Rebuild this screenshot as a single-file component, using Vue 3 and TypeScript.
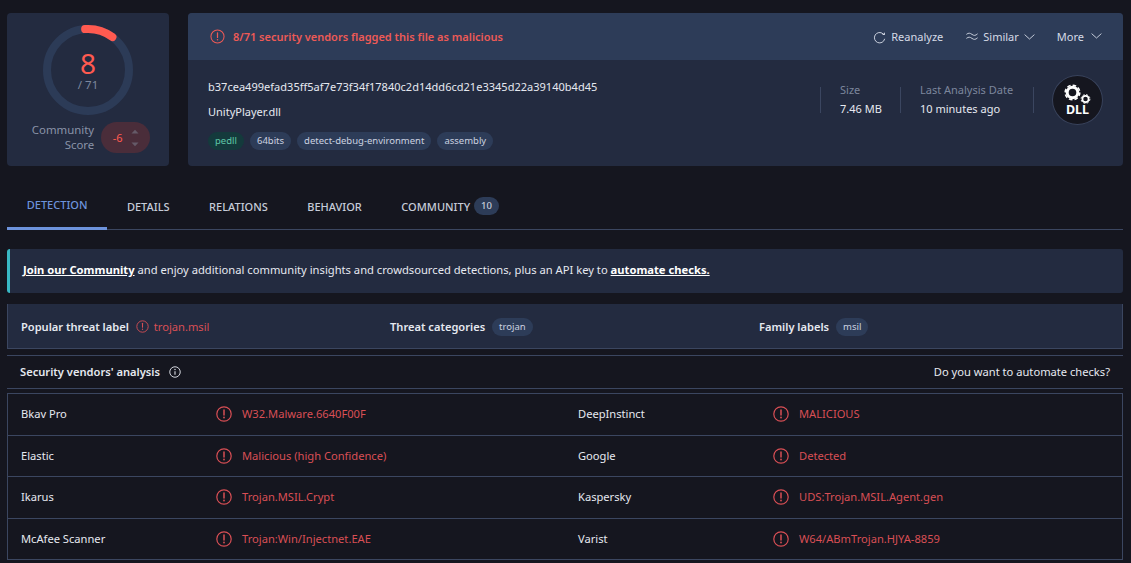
<script setup lang="ts">
interface VendorRow {
  name: string
  result: string
  name2: string
  result2: string
}

const tags = ['64bits', 'detect-debug-environment', 'assembly']
const tabs = ['DETECTION', 'DETAILS', 'RELATIONS', 'BEHAVIOR']
const rows: VendorRow[] = [
  { name: 'Bkav Pro', result: 'W32.Malware.6640F00F', name2: 'DeepInstinct', result2: 'MALICIOUS' },
  { name: 'Elastic', result: 'Malicious (high Confidence)', name2: 'Google', result2: 'Detected' },
  { name: 'Ikarus', result: 'Trojan.MSIL.Crypt', name2: 'Kaspersky', result2: 'UDS:Trojan.MSIL.Agent.gen' },
  { name: 'McAfee Scanner', result: 'Trojan:Win/Injectnet.EAE', name2: 'Varist', result2: 'W64/ABmTrojan.HJYA-8859' },
]
</script>

<template>
  <div class="page">
    <section class="top">
      <div class="score-card">
        <div class="gauge">
          <svg viewBox="0 0 92 92" width="92" height="92" aria-hidden="true">
            <circle cx="46" cy="46" r="41" fill="none" stroke="#2c3b57" stroke-width="8" />
            <circle
              cx="46"
              cy="46"
              r="41"
              fill="none"
              stroke="#ff5a50"
              stroke-width="8"
              stroke-linecap="round"
              stroke-dasharray="29 300"
              transform="rotate(-94 46 46)"
            />
          </svg>
          <div class="gauge-text">
            <div class="gauge-num">8</div>
            <div class="gauge-total">/ 71</div>
          </div>
        </div>
        <div class="community">
          <div class="community-label">Community<br />Score</div>
          <div class="vote">
            <span class="vote-num">-6</span>
            <span class="vote-arrows">
              <svg width="8" height="5" viewBox="0 0 8 5"><path d="M0.5 4.5 L4 0.8 L7.5 4.5 Z" fill="#655a68" /></svg>
              <svg width="8" height="5" viewBox="0 0 8 5"><path d="M0.5 0.5 L4 4.2 L7.5 0.5 Z" fill="#655a68" /></svg>
            </span>
          </div>
        </div>
      </div>

      <div class="file-card">
        <div class="file-head">
          <div class="flag">
            <svg class="alert" width="15" height="15" viewBox="0 0 16 16" aria-hidden="true">
              <circle cx="8" cy="8" r="7" fill="none" stroke="currentColor" stroke-width="1.1" />
              <path d="M8 4v5" stroke="currentColor" stroke-width="1.3" stroke-linecap="round" />
              <circle cx="8" cy="11.4" r="0.8" fill="currentColor" />
            </svg>
            <span>8/71 security vendors flagged this file as malicious</span>
          </div>
          <div class="actions">
            <span class="action">
              <svg class="reload" width="13" height="13" viewBox="0 0 14 14" aria-hidden="true">
                <path d="M10.8 3A5.6 5.6 0 1 0 12.6 8.4" fill="none" stroke="#d5dae6" stroke-width="1" />
                <path d="M12.8 1.4v3H9.8Z" fill="#d5dae6" />
              </svg>
              Reanalyze
            </span>
            <span class="action similar">
              <svg width="12" height="8" viewBox="0 0 12 8" aria-hidden="true">
                <path d="M0.4 2.4C2.6 0.6 4 1 6 2.4S9.4 3.8 11.6 1.8" fill="none" stroke="#d5dae6" stroke-width="0.9" />
                <path d="M0.4 6.4C2.6 4.6 4 5 6 6.4S9.4 7.8 11.6 5.8" fill="none" stroke="#d5dae6" stroke-width="0.9" />
              </svg>
              <span class="similar-text">Similar</span>
              <svg class="chev-low" width="11" height="6" viewBox="0 0 11 6" aria-hidden="true"><path d="M0.6 0.6 L5.5 5 L10.4 0.6" fill="none" stroke="#d5dae6" stroke-width="0.9" /></svg>
            </span>
            <span class="action more">
              More
              <svg width="11" height="6" viewBox="0 0 11 6" aria-hidden="true"><path d="M0.6 0.6 L5.5 5 L10.4 0.6" fill="none" stroke="#d5dae6" stroke-width="0.9" /></svg>
            </span>
          </div>
        </div>
        <div class="file-body">
          <div class="file-main">
            <div class="hash">b37cea499efad35ff5af7e73f34f17840c2d14dd6cd21e3345d22a39140b4d45</div>
            <div class="file-name">UnityPlayer.dll</div>
            <div class="tags">
              <span class="tag green">pedll</span>
              <span v-for="tag in tags" :key="tag" class="tag">{{ tag }}</span>
            </div>
          </div>
          <div class="meta">
            <div class="meta-item size">
              <div class="meta-label">Size</div>
              <div class="meta-value">7.46 MB</div>
            </div>
            <div class="meta-item date">
              <div class="meta-label">Last Analysis Date</div>
              <div class="meta-value">10 minutes ago</div>
            </div>
            <div class="meta-item file-type">
              <div class="dll">
                <svg width="28" height="24" viewBox="0 0 28 24" aria-hidden="true">
                  <circle cx="8.5" cy="8.5" r="5.3" fill="none" stroke="#fff" stroke-width="3" />
                  <circle cx="8.5" cy="8.5" r="7.3" fill="none" stroke="#fff" stroke-width="1.6" stroke-dasharray="3.6 2.13" />
                  <circle cx="21.5" cy="15" r="3.1" fill="none" stroke="#fff" stroke-width="1.7" />
                  <circle cx="21.5" cy="15" r="4.4" fill="none" stroke="#fff" stroke-width="0.9" stroke-dasharray="2 1.46" />
                </svg>
                <span>DLL</span>
              </div>
            </div>
          </div>
        </div>
      </div>
    </section>

    <nav class="tabs">
      <a v-for="(tab, i) in tabs" :key="tab" class="tab" :class="{ active: i === 0 }">{{ tab }}</a>
      <a class="tab">COMMUNITY <span class="count">10</span></a>
    </nav>

    <div class="banner">
      <a class="strong-link">Join our Community</a> and enjoy additional community insights and crowdsourced detections, plus an API key to
      <a class="strong-link">automate checks.</a>
    </div>

    <div class="threat">
      <div class="threat-col">
        <b>Popular threat label</b>
        <span class="threat-red">
          <svg width="13" height="13" viewBox="0 0 16 16" aria-hidden="true">
            <circle cx="8" cy="8" r="7" fill="none" stroke="currentColor" stroke-width="1.1" />
            <path d="M8 4v5" stroke="currentColor" stroke-width="1.3" stroke-linecap="round" />
            <circle cx="8" cy="11.4" r="0.8" fill="currentColor" />
          </svg>
          trojan.msil
        </span>
      </div>
      <div class="threat-col">
        <b>Threat categories</b>
        <span class="tag small">trojan</span>
      </div>
      <div class="threat-col">
        <b>Family labels</b>
        <span class="tag small">msil</span>
      </div>
    </div>

    <div class="analysis-head">
      <div class="analysis-title">
        <b>Security vendors' analysis</b>
        <svg width="12" height="12" viewBox="0 0 16 16" aria-hidden="true">
          <circle cx="8" cy="8" r="7" fill="none" stroke="#e6e9f0" stroke-width="1.2" />
          <path d="M8 7v4.6" stroke="#e6e9f0" stroke-width="1.4" />
          <circle cx="8" cy="4.7" r="0.9" fill="#e6e9f0" />
        </svg>
      </div>
      <span>Do you want to automate checks?</span>
    </div>

    <div class="table">
      <div v-for="row in rows" :key="row.name" class="row">
        <div class="vendor">{{ row.name }}</div>
        <div class="result">
          <svg width="16" height="16" viewBox="0 0 16 16" aria-hidden="true">
            <circle cx="8" cy="8" r="7.2" fill="none" stroke="currentColor" stroke-width="1.2" />
            <path d="M8 4v5" stroke="currentColor" stroke-width="1.5" stroke-linecap="round" />
            <circle cx="8" cy="11.5" r="0.9" fill="currentColor" />
          </svg>
          <span>{{ row.result }}</span>
        </div>
        <div class="vendor">{{ row.name2 }}</div>
        <div class="result">
          <svg width="16" height="16" viewBox="0 0 16 16" aria-hidden="true">
            <circle cx="8" cy="8" r="7.2" fill="none" stroke="currentColor" stroke-width="1.2" />
            <path d="M8 4v5" stroke="currentColor" stroke-width="1.5" stroke-linecap="round" />
            <circle cx="8" cy="11.5" r="0.9" fill="currentColor" />
          </svg>
          <span>{{ row.result2 }}</span>
        </div>
      </div>
    </div>
  </div>
</template>

<style scoped>
.page {
  width: 1131px;
  height: 563px;
  overflow: hidden;
  box-sizing: border-box;
  padding: 13px 8px 0 7px;
  background: #15161f;
  color: #e6e9f0;
  font-family: "Noto Sans", "Liberation Sans", sans-serif;
  font-size: 11.15px;
}

.top {
  display: grid;
  grid-template-columns: 162px 1fr;
  gap: 19px;
  height: 153px;
}

.score-card {
  background: #232b40;
  border-radius: 4px;
  display: flex;
  flex-direction: column;
  align-items: center;
  padding-top: 11px;
}

.gauge {
  position: relative;
  width: 92px;
  height: 92px;
}

.gauge-text {
  position: absolute;
  inset: 0;
  display: flex;
  flex-direction: column;
  align-items: center;
  justify-content: center;
}

.gauge-num {
  color: #ff5a50;
  font-size: 28px;
  font-weight: 400;
  line-height: 28px;
  margin-top: 1px;
}

.gauge-total {
  color: #7d889e;
  font-size: 11.5px;
  line-height: 16px;
}

.community {
  display: flex;
  align-items: center;
  gap: 7px;
  margin-top: 6px;
  margin-left: 6px;
}

.community-label {
  color: #8a93a8;
  text-align: right;
  font-size: 11.4px;
  line-height: 15px;
  margin-top: -2px;
}

.vote {
  width: 49px;
  height: 31px;
  border-radius: 16px;
  background: #4a2d3a;
  display: flex;
  align-items: center;
  justify-content: center;
  gap: 8px;
}

.vote-num {
  color: #ff5a50;
  font-size: 11px;
}

.vote-arrows {
  display: flex;
  flex-direction: column;
  gap: 8px;
}

.vote-arrows svg {
  display: block;
}

.file-card {
  background: #232b40;
  border-radius: 4px;
  overflow: hidden;
  display: flex;
  flex-direction: column;
}

.file-head {
  height: 47px;
  flex: none;
  background: #2d3c58;
  display: flex;
  align-items: center;
  justify-content: space-between;
  padding: 0 21px 1px 22px;
  box-sizing: border-box;
}

.flag {
  display: flex;
  align-items: center;
  gap: 8px;
  color: #ee5a56;
  font-weight: 600;
  font-size: 11px;
}

.actions {
  display: flex;
  align-items: center;
  color: #d5dae6;
  font-size: 11px;
}

.action {
  display: inline-flex;
  align-items: center;
  gap: 5px;
}

.reload {
  margin-top: 2px;
}

.similar {
  margin-left: 23px;
  gap: 6px;
}

.similar-text {
  margin-left: -1px;
  margin-right: -1px;
}

.chev-low {
  margin-top: 2px;
}

.more {
  margin-left: 22px;
  gap: 7px;
}

.file-body {
  flex: 1;
  display: flex;
  justify-content: space-between;
  padding: 0 20px 0 20px;
}

.file-main {
  padding-top: 18px;
}

.hash {
  line-height: 17px;
  font-size: 11px;
  letter-spacing: 0.02px;
}

.file-name {
  line-height: 17px;
  font-size: 11px;
  margin-top: 8px;
}

.tags {
  display: flex;
  gap: 6px;
  margin-top: 12px;
}

.tag {
  display: inline-block;
  height: 18px;
  line-height: 18px;
  padding: 0 7px;
  border-radius: 9px;
  background: #2d3c58;
  color: #ccd2e0;
  font-size: 9.5px;
}

.tag.green {
  background: #143a3c;
  color: #5fc8a8;
}

.meta {
  display: flex;
  align-items: flex-start;
  padding-top: 27px;
}

.meta-item {
  height: 26px;
  border-left: 1px solid #3b4660;
  padding-left: 19px;
}

.size {
  width: 60px;
}

.date {
  width: 113px;
  padding-left: 19px;
}

.file-type {
  padding-left: 18px;
  position: relative;
}

.meta-label {
  color: #7c869c;
  line-height: 14px;
  font-size: 11px;
  margin-top: -4px;
}

.meta-value {
  line-height: 17px;
  font-size: 11px;
  margin-top: 3px;
}

.dll {
  width: 51px;
  height: 50px;
  margin-top: -12px;
  box-sizing: border-box;
  border: 1px solid #39435c;
  border-radius: 50%;
  background: #15161f;
  display: flex;
  flex-direction: column;
  align-items: center;
  padding-top: 8px;
  color: #fff;
}

.dll svg {
  display: block;
}

.dll span {
  font-weight: 700;
  font-size: 12.5px;
  line-height: 12px;
  margin-top: -4px;
}

.tabs {
  height: 50px;
  margin-top: 14px;
  box-sizing: border-box;
  border-bottom: 1px solid #3b4660;
  display: flex;
}

.tab {
  display: flex;
  align-items: center;
  gap: 4px;
  padding: 2px 19.75px 0;
  margin-bottom: -1px;
  font-size: 11px;
  font-weight: 500;
  color: #c6ccd9;
  box-sizing: border-box;
  height: 50px;
}

.tab.active {
  color: #6d93dc;
  border-bottom: 3px solid #6d93dc;
}

.count {
  display: inline-block;
  height: 18px;
  line-height: 18px;
  padding: 0 7px;
  border-radius: 9px;
  background: #2d3c58;
  font-size: 9.5px;
}

.banner {
  margin-top: 19px;
  height: 44px;
  line-height: 42px;
  box-sizing: border-box;
  background: #232b40;
  border-left: 3px solid #39b8c4;
  border-radius: 3px;
  padding-left: 13px;
  font-size: 11.2px;
}

.strong-link {
  color: #fff;
  font-weight: 700;
  text-decoration: underline;
}

.threat {
  margin-top: 11px;
  height: 45px;
  box-sizing: border-box;
  background: #232b40;
  border: 1px solid #3b4660;
  border-top: none;
  display: grid;
  grid-template-columns: 369px 369px 1fr;
  align-items: center;
  padding-left: 13px;
}

.threat-col {
  display: flex;
  align-items: center;
  gap: 7px;
}

.threat-col .tag {
  margin-top: 1px;
}

.threat-col b {
  font-weight: 600;
  font-size: 11.1px;
}

.threat-red {
  display: inline-flex;
  align-items: center;
  gap: 5px;
  color: #d94f55;
}

.analysis-head {
  margin-top: 6px;
  height: 34px;
  box-sizing: border-box;
  border-top: 1px solid #3b4660;
  border-bottom: 1px solid #3b4660;
  display: flex;
  align-items: center;
  justify-content: space-between;
  padding: 0 13px;
  line-height: 14px;
}

.analysis-title {
  display: flex;
  align-items: center;
  gap: 9px;
}

.analysis-title b {
  font-weight: 600;
}

.table {
  margin-top: 4px;
  border: 1px solid #3b4660;
  border-bottom: none;
}

.row {
  display: grid;
  grid-template-columns: 195px 362px 195px 1fr;
  height: 41.6px;
  box-sizing: border-box;
  border-bottom: 1px solid #3b4660;
  align-items: center;
  padding-bottom: 1px;
}

.vendor {
  padding-left: 13px;
}

.result {
  display: flex;
  align-items: center;
  gap: 10px;
  padding-left: 13px;
  color: #d94f55;
}

.result svg {
  flex: none;
  margin-top: 1px;
}
</style>

<style>
html,
body {
  background: #15161f;
}
</style>
